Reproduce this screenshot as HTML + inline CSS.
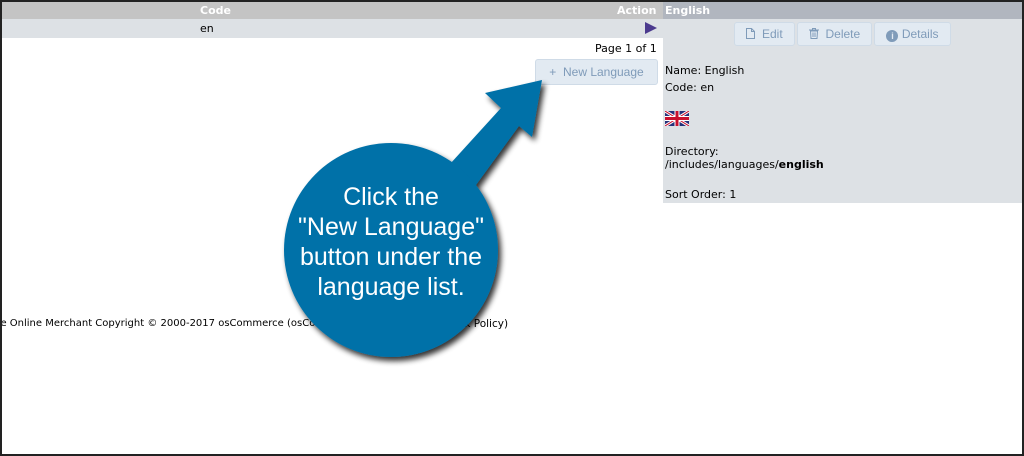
<!DOCTYPE html>
<html><head><style>
*{margin:0;padding:0;box-sizing:border-box}
body{width:1024px;height:456px;overflow:hidden;background:#fff;font-family:"DejaVu Sans","Liberation Sans",sans-serif;font-size:11px;color:#000;position:relative}
.abs{position:absolute}
.frame{position:absolute;left:0;top:0;width:1024px;height:456px;border:2px solid #222;pointer-events:none;z-index:50}
.btn{position:absolute;top:22px;height:24px;background:#e2eaf2;border:1px solid #cfdbe7;border-radius:3px;color:#7f9bb9;font-family:"Liberation Sans",sans-serif;font-size:12px;line-height:22px;text-align:center}
.t{position:absolute;white-space:nowrap}
</style></head><body>
<div class="abs" style="left:0;top:2px;width:663px;height:17px;background:#c4c4c4"></div>
<div class="abs" style="left:663px;top:2px;width:361px;height:17px;background:#b1b6bf"></div>
<div class="abs" style="left:0;top:19px;width:663px;height:19px;background:#dde1e5"></div>
<div class="abs" style="left:663px;top:19px;width:361px;height:184px;background:#dde1e5"></div>
<div class="t" style="left:200px;top:4px;color:#fff;font-weight:bold">Code</div>
<div class="t" style="left:617px;top:4px;color:#fff;font-weight:bold">Action</div>
<div class="t" style="left:665px;top:4px;color:#fff;font-weight:bold">English</div>
<div class="t" style="left:200px;top:22px">en</div>
<svg class="abs" style="left:645px;top:22px" width="12" height="12"><polygon points="0,0 12,6 0,12" fill="#4b3a8e"/></svg>
<div class="t" style="left:595px;top:42px">Page 1 of 1</div>
<div class="btn" style="left:535px;top:59px;width:123px;height:26px;line-height:24px">+&nbsp; New Language</div>
<div class="btn" style="left:734px;width:61px"><svg width="9" height="11" viewBox="0 0 9 11" style="vertical-align:-1px"><path d="M0.5,0.5H5.5L8.5,3.5V10.5H0.5Z M5.5,0.5V3.5H8.5" fill="none" stroke="#7f9bb9"/></svg>&nbsp; Edit</div>
<div class="btn" style="left:797px;width:75px"><svg width="10" height="11" viewBox="0 0 10 11" style="vertical-align:-1px"><path d="M0,2H10M3.5,2V0.5H6.5V2M1.5,3H8.5L8,10.5H2Z" fill="none" stroke="#7f9bb9"/><path d="M4,4.5V9M6,4.5V9" stroke="#7f9bb9"/></svg>&nbsp; Delete</div>
<div class="btn" style="left:874px;width:77px"><span style="display:inline-block;width:12px;height:12px;border-radius:6px;background:#7f9bb9;color:#e2eaf2;font-size:9px;line-height:12px;font-weight:bold;vertical-align:-1px">i</span> Details</div>
<div class="t" style="left:665px;top:64px">Name: English</div>
<div class="t" style="left:665px;top:81px">Code: en</div>
<svg class="abs" style="left:665px;top:111px" width="24" height="15" viewBox="0 0 24 15">
<rect width="24" height="15" fill="#24307a"/>
<path d="M0,0L24,15M24,0L0,15" stroke="#fff" stroke-width="3"/>
<path d="M0,0L24,15M24,0L0,15" stroke="#c8102e" stroke-width="1"/>
<path d="M12,0V15M0,7.5H24" stroke="#fff" stroke-width="5"/>
<path d="M12,0V15M0,7.5H24" stroke="#c8102e" stroke-width="3"/>
</svg>
<div class="t" style="left:665px;top:145px">Directory:</div>
<div class="t" style="left:665px;top:158px">/includes/languages/<b>english</b></div>
<div class="t" style="left:665px;top:188px">Sort Order: 1</div>
<div class="abs" style="left:0;top:318px;width:1024px;height:16px;overflow:hidden">
<div class="t" style="left:-59px;top:0;font-size:10px">osCommerce Online Merchant Copyright © 2000-2017 osCommerce (osCommerce Trademark</div>
<div class="t" style="left:460px;top:0;font-size:10.5px">rk Policy)</div>
</div>
<svg class="abs" style="left:0;top:0" width="1024" height="456">
<defs><filter id="sh" x="-20%" y="-20%" width="140%" height="140%"><feGaussianBlur in="SourceAlpha" stdDeviation="3"/><feOffset dx="3" dy="4"/><feComponentTransfer><feFuncA type="linear" slope="0.8"/></feComponentTransfer><feMerge><feMergeNode/><feMergeNode in="SourceGraphic"/></feMerge></filter></defs>
<g filter="url(#sh)" fill="#0071a8">
<polygon points="542,80 485,93 501,108 440,175 468,196 519,126 532,137"/>
<circle cx="391" cy="250" r="107"/>
</g>
<g fill="#fff" font-family="Liberation Sans,Arial,sans-serif" font-size="25" text-anchor="middle">
<text x="391" y="205">Click the</text>
<text x="391" y="235">"New Language"</text>
<text x="391" y="265">button under the</text>
<text x="391" y="295">language list.</text>
</g>
</svg>
<div class="frame"></div>
</body></html>
